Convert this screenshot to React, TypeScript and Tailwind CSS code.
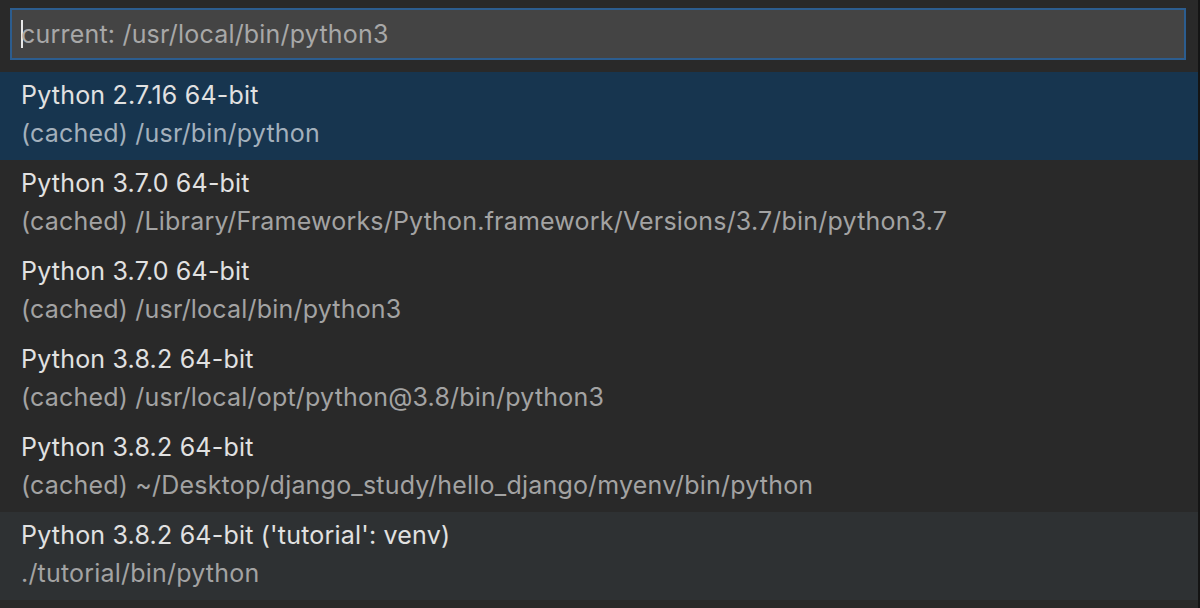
import { useState } from "react";

type Interpreter = {
  label: string;
  detail: string;
};

const interpreters: Interpreter[] = [
  { label: "Python 2.7.16 64-bit", detail: "(cached) /usr/bin/python" },
  {
    label: "Python 3.7.0 64-bit",
    detail:
      "(cached) /Library/Frameworks/Python.framework/Versions/3.7/bin/python3.7",
  },
  { label: "Python 3.7.0 64-bit", detail: "(cached) /usr/local/bin/python3" },
  {
    label: "Python 3.8.2 64-bit",
    detail: "(cached) /usr/local/opt/python@3.8/bin/python3",
  },
  {
    label: "Python 3.8.2 64-bit",
    detail: "(cached) ~/Desktop/django_study/hello_django/myenv/bin/python",
  },
  {
    label: "Python 3.8.2 64-bit ('tutorial': venv)",
    detail: "./tutorial/bin/python",
  },
];

function App() {
  const [selected] = useState(0);
  const [hovered, setHovered] = useState<number | null>(5);

  return (
    <div className="w-[1200px] h-[608px] bg-[#292929] font-['Inter','Noto_Sans',sans-serif] text-[25px] tracking-[0.2px] overflow-hidden flex">
      <div className="flex-1 flex flex-col">
        {/* filter input */}
        <div className="pt-2 pl-[10px] pr-[12px] pb-3">
          <div className="h-[52px] border-2 border-[#2c5d8f] bg-[#444444] flex items-center pl-[9px]">
            <span className="w-[2px] h-[28px] bg-[#e8e8e8] -mr-[2px]" />
            <span className="text-[#a8a8a8] leading-none pt-[1px]">
              current: /usr/local/bin/python3
            </span>
          </div>
        </div>

        {/* interpreter list */}
        <div className="flex flex-col">
          {interpreters.map((item, i) => {
            const isSel = i === selected;
            const isHover = !isSel && i === hovered;
            return (
              <div
                key={i}
                onMouseEnter={() => setHovered(i)}
                className={
                  "h-[88px] pl-[21px] pt-[5px] flex flex-col " +
                  (isSel ? "bg-[#17354f]" : isHover ? "bg-[#2e3133]" : "")
                }
              >
                <div className="h-[38px] flex items-center text-[#e1e1e1] whitespace-nowrap">
                  {item.label}
                </div>
                <div
                  className={
                    "h-[38px] flex items-center whitespace-nowrap " +
                    (isSel ? "text-[#a3b0bc]" : "text-[#a3a3a3]")
                  }
                >
                  {item.detail}
                </div>
              </div>
            );
          })}
        </div>
      </div>
      {/* scrollbar track edge */}
      <div className="w-[2px] bg-[#141414]" />
    </div>
  );
}

export default App;
